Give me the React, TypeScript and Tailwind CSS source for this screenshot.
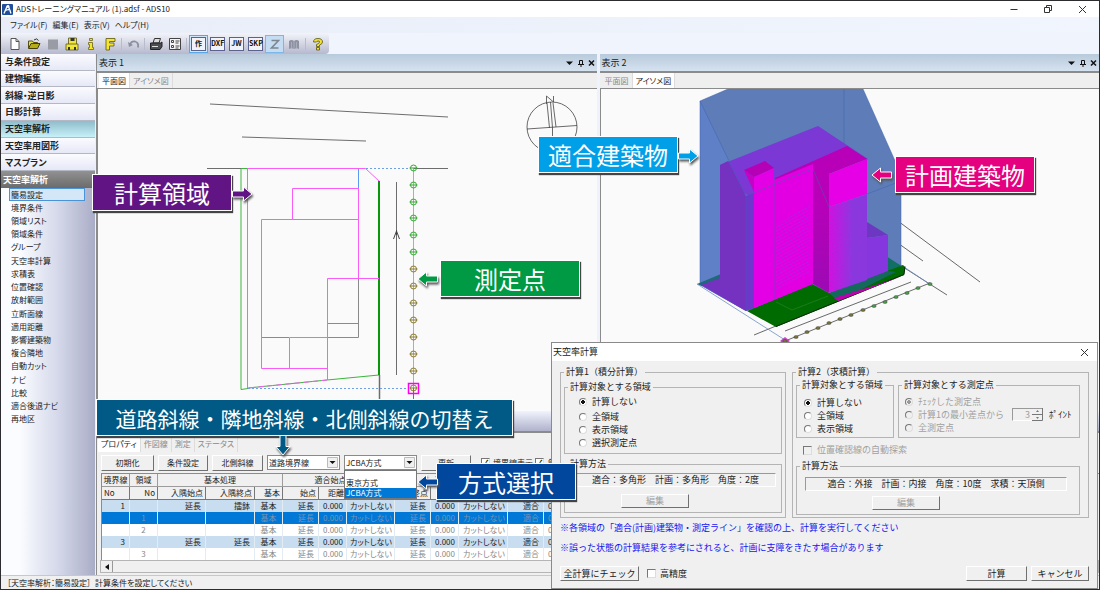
import { ReactNode, useState } from "react";
import clsx from "clsx";

const navItems = ["与条件設定", "建物編集", "斜線・逆日影", "日影計算", "天空率解析", "天空率用図形", "マスプラン"];

const subItems = [
  "簡易設定", "境界条件", "領域リスト", "領域条件", "グループ", "天空率計算", "求積表", "位置確認", "放射範囲",
  "立断面線", "適用距離", "影響建築物", "複合隣地", "自動カット", "ナビ", "比較", "適合後退ナビ", "再地区",
];

const columns = [
  { label: "No", width: "w-[28px]" },
  { label: "No", width: "w-[28px]" },
  { label: "入隅始点", width: "w-[48px]" },
  { label: "入隅終点", width: "w-[49px]" },
  { label: "基本", width: "w-[28px]" },
  { label: "始点", width: "w-[36px]" },
  { label: "距離", width: "w-[28px]" },
  { label: "", width: "w-[48px]" },
  { label: "終点", width: "w-[36px]" },
  { label: "", width: "w-[28px]" },
  { label: "", width: "w-[49px]" },
  { label: "", width: "w-[36px]" },
  { label: "", width: "w-[28px]" },
];

const tail = ["基本", "延長", "0.000", "カットしない", "延長", "0.000", "カットしない", "適合", "0.000"];

const rows = [
  { kind: "head", cells: ["1", "", "延長", "擂鉢", ...tail] },
  { kind: "selected", cells: ["", "1", "", "", ...tail] },
  { kind: "plain", cells: ["", "2", "", "", ...tail] },
  { kind: "head", cells: ["3", "", "延長", "延長", ...tail] },
  { kind: "plain", cells: ["", "3", "", "", ...tail] },
];

export default function App() {
  return (
    <div className="relative flex h-screen min-h-[590px] flex-col overflow-hidden border border-[#2b2b30] bg-[#f0f0f0] font-['Noto_Sans_CJK_JP','Noto_Sans',sans-serif] text-[8px] leading-3 text-[#222]">
      <TitleBar />
      <MenuBar />
      <ToolBar />

      <div className="flex min-h-0 flex-1">
        <Sidebar />
        <main className="flex min-w-0 flex-1 flex-col border-l border-[#8b8b8b]">
          <div className="flex min-h-0 flex-1 gap-[3px] bg-[#eef2fb]">
            <ViewPane title="表示 1" active="平面図">
              <PlanDrawing />
            </ViewPane>
            <ViewPane title="表示 2" active="アイソメ図">
              <IsoDrawing />
            </ViewPane>
          </div>
          <div className="h-5 shrink-0 bg-linear-to-b from-[#f1f4fd] to-[#b0b2cc]" />
          <PropertyPanel />
        </main>
      </div>

      <footer className="flex h-[14px] shrink-0 items-center gap-1 border-t border-[#c8c8c8] px-1.5 [font-feature-settings:'palt']">
        <span>［天空率解析：簡易設定］</span>
        <span>計算条件を設定してください</span>
      </footer>

      <CalcDialog />

      <Callout className="top-[173px] left-[91px] w-[140px] bg-[#611584] text-2xl">計算領域</Callout>
      <Arrow className="top-[183px] left-[230px]" color="#611584" direction="right" />
      <Callout className="top-[259px] left-[439px] w-[140px] bg-[#009944] text-2xl">測定点</Callout>
      <Arrow className="top-[268px] left-[414px]" color="#009944" direction="left" />
      <Callout className="top-[135px] left-[537px] w-[140px] bg-[#00a0e9] text-2xl">適合建築物</Callout>
      <Arrow className="top-[145px] left-[676px]" color="#00a0e9" direction="right" />
      <Callout className="top-[155px] left-[894px] w-[140px] bg-[#e4007f] text-2xl">計画建築物</Callout>
      <Arrow className="top-[164px] left-[868px]" color="#e4007f" direction="left" />
      <Callout className="top-[398px] left-[95px] w-[417px] bg-[#005a85] text-[21px]">
        道路斜線・隣地斜線・北側斜線の切替え
      </Callout>
      <Arrow className="top-[435px] left-[270px]" color="#005a85" direction="down" />
      <Callout className="top-[462px] left-[435px] w-[140px] bg-[#00479d] text-2xl">方式選択</Callout>
      <Arrow className="top-[471px] left-[414px]" color="#00479d" direction="left" />
    </div>
  );
}

function TitleBar() {
  return (
    <header className="flex h-4 shrink-0 items-center bg-white pl-px">
      <svg className="size-[11px]" viewBox="0 0 11 11">
        <rect width="11" height="11" rx="1" fill="#1f4e9c" />
        <path d="M2 9.5 5 2.5h1.5L9 9.5M3 7q3-2.500 5.500-.5" fill="none" stroke="#fff" strokeWidth="1.300" />
        <circle cx="6" cy="2.500" r="1.400" fill="#fff" />
      </svg>
      <h1 className="ml-[3px] flex-1 [font-feature-settings:'palt']">ADSトレーニングマニュアル (1).adsf - ADS10</h1>
      <div className="flex gap-6 pr-3">
        <button aria-label="最小化">
          <svg className="size-[10px]" viewBox="0 0 10 10" stroke="#333">
            <path d="M1.500 5.500h7" />
          </svg>
        </button>
        <button aria-label="元に戻す">
          <svg className="size-[10px]" viewBox="0 0 10 10" stroke="#333" fill="none">
            <path d="M1.500 3.500h5v5h-5zM3.500 3V1.500h5v5H7" />
          </svg>
        </button>
        <button aria-label="閉じる">
          <svg className="size-[10px]" viewBox="0 0 10 10" stroke="#333">
            <path d="m2 2 7 7M9 2 2 9" />
          </svg>
        </button>
      </div>
    </header>
  );
}

function MenuBar() {
  return (
    <nav className="flex h-4 shrink-0 items-center gap-[5px] bg-linear-to-r from-[#e9edf8] to-[#f1f5fd] pl-[9px] [font-feature-settings:'palt']">
      {["ファイル(F)", "編集(E)", "表示(V)", "ヘルプ(H)"].map((item) => (
        <button key={item}>{item}</button>
      ))}
    </nav>
  );
}

const Tool = ({ label, children }: { label: string; children: ReactNode }) => (
  <button aria-label={label} className="grid w-[19px] place-items-center">
    <svg className="size-[14px]" viewBox="0 0 14 14">
      {children}
    </svg>
  </button>
);

const TextTool = ({ active, children }: { active?: boolean; children: string }) => (
  <button
    className={clsx(
      "grid h-[18px] w-[19px] place-items-center border",
      active ? "border-[#5aa7e6] bg-[#cfe5fa]" : "border-transparent"
    )}
  >
    <span className="grid h-[14px] w-[15px] place-items-center border border-[#5a6390] bg-[#f1f3fb] text-[7px] leading-none font-bold text-[#111]">
      {children}
    </span>
  </button>
);

const Separator = ({ wide }: { wide?: boolean }) => (
  <span className={clsx("h-3 w-px bg-[#b9bccb]", wide ? "mx-0.5" : "mx-px")} />
);

function ToolBar() {
  return (
    <div className="flex h-[21px] shrink-0 bg-[#f0f4fd]">
      <div className="flex items-center rounded-r bg-linear-to-b from-[#f3f4fa] to-[#b6b9ce] pr-0.5 pl-1">
        <Tool label="新規">
          <path d="M3 1.500h5l3 3v8H3z" fill="#fff" stroke="#555" />
          <path d="M8 1.500v3h3" fill="none" stroke="#555" />
        </Tool>
        <Tool label="開く">
          <path d="M1.500 11V4h4l1 1.500h4V7" fill="#e6df3a" stroke="#55501a" />
          <path d="m1.500 11.500 2.500-5h9l-2.500 5z" fill="#b5ac18" stroke="#44400e" />
          <path d="M7 3q3-2.500 4.500.5" fill="none" stroke="#333" />
        </Tool>
        <Tool label="停止">
          <path d="M2 2.500h10v10H2z" fill="#999ba5" />
        </Tool>
        <Tool label="保存">
          <path d="M3.500 1h8v7h-8z" fill="#f0e63a" stroke="#5a5620" strokeWidth=".8" />
          <path d="M1 7h12v6H1z" fill="#f0e63a" stroke="#5a5620" strokeWidth=".8" />
          <path d="M5.500 1h4v3h-4zM3 10h2v3H3zM9 10h2v3H9z" fill="#333" />
        </Tool>
        <Tool label="情報">
          <path d="M5.500 1.500h3v2h-3zM4.500 5.500h4v5h1v2h-5v-2h1v-3h-1z" fill="#f5e52f" stroke="#6b651a" strokeWidth=".8" />
        </Tool>
        <Tool label="図形">
          <path d="M3 1.500h9v3H6.500v1.500H11v3H6.500v4H3z" fill="#f5e52f" stroke="#6b651a" strokeWidth=".9" />
        </Tool>
        <Separator wide />
        <Tool label="元に戻す">
          <path d="M3 8q1-4 5-3.500 4 1 3 6" fill="none" stroke="#8c8f9d" strokeWidth="1.800" />
          <path d="m1 5 1 5 4-2z" fill="#8c8f9d" />
        </Tool>
        <Separator />
        <Tool label="印刷">
          <path d="m4 6 1.500-4.500h6L10 6z" fill="#ddd" stroke="#333" />
          <path d="M1.500 6h10l1.500-1v4.500l-2 3H1.500z" fill="#4c4d52" stroke="#222" />
          <path d="M3 9.500h6" stroke="#ddd" />
        </Tool>
        <Tool label="設定">
          <path d="M1.500 1.500h11v11h-11z" fill="#f4f4f4" stroke="#444" />
          <path d="M3.500 3.500h2v2h-2zM3.500 8.500h2v2h-2zM7.500 4h4M7.500 6h3M7.500 9h4M7.500 11h3" fill="none" stroke="#444" />
        </Tool>
        <Separator wide />
        <TextTool active>作</TextTool>
        <TextTool>DXF</TextTool>
        <TextTool>JW</TextTool>
        <TextTool>SKP</TextTool>
        <button aria-label="Z" className="grid h-[18px] w-[19px] place-items-center border border-[#7db6e8] bg-[#c5ddf3]">
          <svg className="size-[12px]" viewBox="0 0 12 12" fill="none" stroke="#7f858f" strokeWidth="1.600">
            <path d="M2.500 2.500h7l-7 7.500h7" />
          </svg>
        </button>
        <Tool label="マニュアル">
          <path d="M2 4q2.500-2 5 0 2.500-2 5 0v8q-2.500-1.500-5 0-2.500-1.500-5 0z" fill="#8f92a2" />
          <path d="M7 4v8M4.500 5v6M9.500 5v6" stroke="#a9acba" />
        </Tool>
        <Separator wide />
        <Tool label="ヘルプ">
          <path
            d="M2.500 5Q2.500 1.500 7 1.500T11.500 5Q11.500 7 8.500 8v1.500h-3V7.500Q8.500 6.500 8.500 5T7 4 5.500 5zM5.500 10.500h3v2.500h-3z"
            fill="#f2e22e"
            stroke="#55501a"
            strokeWidth=".8"
          />
        </Tool>
      </div>
    </div>
  );
}

function Sidebar() {
  const [nav, setNav] = useState("天空率解析");
  const [sub, setSub] = useState("簡易設定");

  return (
    <aside className="mr-px flex w-[94px] shrink-0 flex-col bg-linear-to-r from-[#fafcff] from-20% via-[#d5d9ea] via-60% to-[#aaadc6]">
      <div className="grid h-[117px] shrink-0 grid-rows-7">
        {navItems.map((item) => (
          <button
            key={item}
            onClick={() => setNav(item)}
            className={clsx(
              "border-b border-[#b4b7c4] pl-1 text-left text-[9px] leading-none font-bold [font-feature-settings:'palt']",
              nav === item
                ? "bg-linear-to-b from-[#8fbccb] to-[#c7f1f8]"
                : "bg-linear-to-b from-[#fbfbff] to-[#e6e8f6]"
            )}
          >
            {item}
          </button>
        ))}
      </div>
      <h2 className="flex h-[17px] shrink-0 items-center bg-linear-to-b from-[#929292] to-[#6b6b6b] pl-0.5 text-[9px] font-bold text-white">
        {nav}
      </h2>
      <ul className="grid h-[238px] shrink-0 auto-rows-fr">
        {subItems.map((item) => (
          <li key={item} className="flex pr-2.5 pl-2">
            <button
              onClick={() => setSub(item)}
              className={clsx(
                "w-full border px-px text-left leading-none [font-feature-settings:'palt']",
                sub === item ? "border-[#4a93d6] bg-[#d3e7f8]" : "border-transparent"
              )}
            >
              {item}
            </button>
          </li>
        ))}
      </ul>
    </aside>
  );
}

function ViewPane({ title, active, children }: { title: string; active: string; children: ReactNode }) {
  return (
    <section className="flex min-w-0 flex-1 flex-col">
      <div className="flex h-[17px] shrink-0 items-center bg-linear-to-b from-[#b8cadb] to-[#d5e2f0] pr-0.5 pl-0.5">
        <h2 className="flex-1 text-[9px]">{title}</h2>
        <svg className="h-[10px] w-[31px]" viewBox="0 0 31 10" stroke="#111" fill="none">
          <path d="M2 3.500h7L5.500 7z" fill="#111" stroke="none" />
          <path d="M15.500 6V2.500h3V6M14 6.500h6M17 6.500V9" />
          <path d="m25 2.500 5 5M30 2.500l-5 5" strokeWidth="1.500" />
        </svg>
      </div>
      <div className="flex h-[17px] shrink-0 border-t-2 border-[#8b8b8b] bg-[#efefef] pl-0.5">
        {["平面図", "アイソメ図"].map((tab) => (
          <button
            key={tab}
            className={clsx(
              "border-r border-[#dcdcdc] px-[3px] [font-feature-settings:'palt']",
              tab === active ? "bg-white" : "text-[#888]"
            )}
          >
            {tab}
          </button>
        ))}
      </div>
      <div className="min-h-0 flex-1 overflow-hidden border-t border-l border-[#8b8b8b] bg-[#fafafa]">{children}</div>
    </section>
  );
}

const measurePoints = [168, 185, 202, 218, 235, 252, 269, 286, 303, 320, 337, 354, 371, 388];

function PlanDrawing() {
  return (
    <svg className="block h-[323px] w-[497px]" viewBox="98 89 497 323" fill="none">
      <g stroke="#6d6d6d">
        <path d="M210 104 448 117M242 137l124 4M207 168.500h34M414 168.500h34" />
        <path d="M261 337.500h28M327 337.500h31.500V278M327 323.500h31.500" stroke="#8a8a8a" />
        <path d="M396.500 182v193M413.500 388v24" />
        <path d="M379.500 375v37" strokeWidth="1.500" />
        <path d="m393.500 239 3-8 3 8M396.500 230v5" stroke="#444" />
      </g>
      <g stroke="#3bb53b">
        <path d="M248 168.500h-7V389.500l7-1" />
        <path d="m379 375-52 5-79 8" />
      </g>
      <path d="M379 181v194" stroke="#0a960a" strokeWidth="2" />
      <g stroke="#f95cf9">
        <path d="M247.500 388V168.500H365.500L379 181" />
        <path d="M358.500 188.500h-66V219M358.500 188v90M358.500 219.500h-97V368.500h66M289.500 368V337.500h38M379 278.500h-51.500V380" />
        <path d="m327 380-79 8" strokeDasharray="6 3" />
      </g>
      <path d="M358.500 169v19" stroke="#5c9cf0" />
      <path d="M366 168.500h44M248 388.500h160" stroke="#6e9fe0" strokeDasharray="2 2" />
      <path d="M413.500 168v220" stroke="#e8a05c" />
      {measurePoints.map((y, i) => (
        <g key={y} stroke={i < 6 ? "#35a835" : "#8a7a34"}>
          <circle cx="413.500" cy={y} r="3" />
          <path d={`M409.500 ${y}h8`} />
        </g>
      ))}
      <path d="M408.500 383.500h10v10h-10z" stroke="#f0e" strokeWidth="1.500" />
      <g stroke="#444" strokeWidth=".8">
        <circle cx="552" cy="127" r="25" />
        <path d="m527 129 50-3.500M547 103l2.500 25M550.500 102l2 26M553 103l3 24M552.500 128v12" />
        <path d="M546.500 104v-8l7 6v-6" />
      </g>
    </svg>
  );
}

const isoPoints = [
  [930, 284], [918, 288], [907, 293], [896, 297], [885, 302], [874, 306], [863, 310],
  [851, 315], [840, 319], [829, 323], [818, 328], [807, 332], [796, 337], [785, 341],
];

function IsoDrawing() {
  return (
    <svg className="block h-[323px] w-[498px]" viewBox="601 89 498 323">
      <defs>
        <linearGradient id="front" x1="0" x2="1" y1="0" y2="0">
          <stop offset=".05" stopColor="#d010e0" />
          <stop offset=".6" stopColor="#8a38de" />
        </linearGradient>
        <linearGradient id="side" x1="0" x2="0" y1="0" y2="1">
          <stop offset=".3" stopColor="#b800b8" />
          <stop offset="1" stopColor="#9c0ab4" />
        </linearGradient>
        <pattern id="hatch" width="4" height="3" patternUnits="userSpaceOnUse" patternTransform="rotate(-28)">
          <path d="M0 1.500h3" stroke="#a82ae0" strokeWidth=".6" />
        </pattern>
      </defs>

      <path d="m867 198 113 84M888 236l35 25M754 335l22-9M785 331l126-49M785 341l145-58M903 267l44 28" stroke="#444" strokeWidth=".8" />
      <path d="m697 284 88 56M901 265l30 20" stroke="#6d8fc4" strokeWidth=".8" />

      <path d="m700 101 28-12h135l33 74 5 20v84l-25 15-130 29-46-26z" fill="#5d7cb8" />
      <path d="m700 101 46 95v115l-46-26z" fill="#5f80c6" />
      <path d="m697 284 24-10v6l-19 6z" fill="#1d6a78" />
      <path d="m886 256 17 11-17 8z" fill="#126f66" />

      <path d="m720 165 98-39 50 33-92 30-22 10-34-20z" fill="#7b38d4" />
      <path d="m720 165 8-4 18 35v115l-45-26 19-7z" fill="#7531c0" />
      <path d="m746 196 8-3v115l-8 3z" fill="#6e36cc" />

      <path d="m747 311 65-27 17 9 74-28 2 2-1 8-128 52z" fill="#006b00" />
      <path d="m776 326.500 128-52 1-8" fill="none" stroke="#042604" />
      <path d="m829 293 59-22 8 1-58 29z" fill="#12695c" />
      <path d="m838 301 62-24-24 8-42 13z" fill="#c000b0" />
      <path d="m776 302 16 8 36-14" fill="none" stroke="#2b8a2b" strokeWidth=".6" />

      <path d="m775 178 72-32 20 13-38 15v20l-16-29-38 15z" fill="#b800b8" />
      <path d="m744 170 21-9 9 7-20 9z" fill="#b600b6" />
      <path d="m744 170 10 7v15z" fill="#c404c4" />
      <path d="m754 177 20-9v132l-20 8z" fill="#e400e4" />
      <path d="m774 180 39-16v120l-39 16z" fill="#e200e2" />
      <path d="m776 225 34-22v70l-34 18z" fill="url(#hatch)" />
      <path d="m813 161 16 13v119l-16-9z" fill="url(#side)" />
      <path d="m829 174 38-15v35l-38 13z" fill="#e600e6" />
      <path d="m829 207 38-13v86l-38 13z" fill="url(#front)" />
      <path d="m829 207 22-7v80l-22 13z" fill="url(#hatch)" />
      <path d="m867 222 21 13-21 3z" fill="#6c38c2" />
      <path d="m867 238 21-3v36l-21 8z" fill="#8636de" />

      <g fill="none" stroke="#3f62ad" strokeWidth=".5">
        <path d="m728 89-28 12 46 95 66-27M700 101v184M844 89v55M863 89l33 74 5 20v84M867 194l34-13M813 169l16 38M746 196v115M774 180v120" />
      </g>

      {isoPoints.map(([x, y], i) => (
        <g key={x}>
          {i === 13 && <path d="m780 341 5-4 5 4-5 4z" fill="#d040c8" />}
          <ellipse cx={x} cy={y} rx="2.200" ry="1.500" fill={i < 6 ? "#4a9a4a" : "#77733c"} stroke="#333" strokeWidth=".4" />
        </g>
      ))}
    </svg>
  );
}

const buttonClasses =
  "border border-t-white border-l-white border-r-[#707070] border-b-[#707070] bg-[#f0f0f0] text-center disabled:text-[#a0a0a0]";

const checkClasses =
  "grid size-[9px] shrink-0 appearance-none place-items-center border border-t-[#777] border-l-[#777] border-r-[#ddd] border-b-[#ddd] bg-white checked:before:text-[8px] checked:before:leading-none checked:before:font-bold checked:before:content-['✓'] disabled:bg-[#f0f0f0]";

const radioClasses =
  "size-2 shrink-0 appearance-none rounded-full border border-t-[#777] border-l-[#777] border-r-[#ddd] border-b-[#ddd] bg-white checked:bg-[radial-gradient(circle,#111_0_2px,#fff_2px)] disabled:bg-[#f0f0f0] disabled:checked:bg-[radial-gradient(circle,#999_0_2px,#f0f0f0_2px)]";

const Combo = ({ label, options }: { label: string; options: string[] }) => (
  <div className="relative w-[73px]">
    <select
      aria-label={label}
      className="h-[15px] w-full appearance-none border border-[#8a8a8a] bg-white pl-px text-[8px] leading-3"
      defaultValue={options[0]}
    >
      {options.map((option) => (
        <option key={option}>{option}</option>
      ))}
    </select>
    <svg className="pointer-events-none absolute top-0.5 right-0.5 h-[11px] w-[11px]" viewBox="0 0 11 11">
      <path d="M.5.5h10v10H.5z" fill="#f0f0f0" stroke="#bbb" />
      <path d="M2.500 4h6L5.500 7z" fill="#111" />
    </svg>
  </div>
);

function PropertyPanel() {
  return (
    <section className="flex h-[144px] shrink-0 flex-col border-t-2 border-[#8b8b8b]">
      <div className="flex h-[19px] items-end pl-px">
        {["プロパティ", "作図線", "測定", "ステータス"].map((tab, i) => (
          <button
            key={tab}
            className={clsx(
              "h-4 border-r border-[#dcdcdc] px-[3px] [font-feature-settings:'palt']",
              i === 0 ? "bg-white" : "text-[#888]"
            )}
          >
            {tab}
          </button>
        ))}
      </div>

      <div className="flex h-[21px] shrink-0 items-center gap-1 pl-1">
        <button className={clsx(buttonClasses, "h-4 w-[53px]")}>初期化</button>
        <button className={clsx(buttonClasses, "h-4 w-[50px]")}>条件設定</button>
        <button className={clsx(buttonClasses, "h-4 w-[51px]")}>北側斜線</button>
        <Combo label="境界線の種類" options={["道路境界線", "隣地境界線", "北側境界線"]} />
        <div className="relative">
          <Combo label="方式" options={["JCBA方式", "東京方式"]} />
          <ul className="absolute top-[15px] left-0 z-10 h-[29px] w-[73px] border border-[#777] bg-white pt-[7px] leading-[10px]">
            <li className="pl-px">東京方式</li>
            <li className="bg-[#0078d7] pl-px text-white">JCBA方式</li>
          </ul>
        </div>
        <button className={clsx(buttonClasses, "h-4 w-[50px]")}>更新</button>
        <label className="ml-1.5 flex items-center gap-[3px] whitespace-nowrap">
          <input type="checkbox" className={checkClasses} defaultChecked />
          境界線表示
        </label>
        <label className="-ml-0.5 flex items-center gap-1 whitespace-nowrap">
          <input type="checkbox" className={checkClasses} defaultChecked />
          領域表示
        </label>
      </div>

      <div className="ml-1 min-h-0 overflow-hidden border-t border-l border-[#8b8b8b] bg-[#f0f0f0]">
        <table className="w-[470px] table-fixed border-separate border-spacing-0 whitespace-nowrap">
          <colgroup>
            {columns.map((column, i) => (
              <col key={i} className={column.width} />
            ))}
          </colgroup>
          <thead>
            <tr className="h-[13px] [&>th]:border-r [&>th]:border-b [&>th]:border-[#9c9c9c] [&>th]:p-0 [&>th]:font-normal">
              <th>境界線</th>
              <th>領域</th>
              <th colSpan={3}>基本処理</th>
              <th colSpan={3}>
                <span className="pr-4">適合始点</span>
              </th>
              <th colSpan={3}>適合終点</th>
              <th colSpan={2} />
            </tr>
            <tr className="h-[13px]">
              {columns.map((column, i) => (
                <th
                  key={i}
                  className={clsx(
                    "border-r border-b border-[#777] px-0.5 py-0 font-normal",
                    i === 0 ? "text-left" : "text-right"
                  )}
                >
                  {column.label}
                </th>
              ))}
            </tr>
          </thead>
          <tbody>
            {rows.map((row, r) => (
              <tr
                key={r}
                className={clsx(
                  "h-3",
                  row.kind === "head" && "bg-[#c8ddf0]",
                  row.kind === "selected" && "bg-[#0078d7] text-[#7894b0]",
                  row.kind === "plain" && "bg-white text-[#888]"
                )}
              >
                {row.cells.map((cell, c) => (
                  <td
                    key={c}
                    className={clsx(
                      "border-r border-[#e3ebf3] py-0 leading-3",
                      c === 1 || c === 4 ? "text-center" : "text-right",
                      c === 7 || c === 10 ? "px-0.5 [font-feature-settings:'palt']" : "px-1"
                    )}
                  >
                    {cell}
                  </td>
                ))}
              </tr>
            ))}
          </tbody>
        </table>
      </div>
      <div className="ml-[3px] flex h-[13px] shrink-0 border border-[#b5b5b5]">
        <button aria-label="左へスクロール" className="grid w-3 place-items-center border-r border-[#999]">
          <svg className="size-[6px]" viewBox="0 0 6 6">
            <path d="M5 0v6L1 3z" fill="#111" />
          </svg>
        </button>
      </div>
    </section>
  );
}

const Group = ({
  title,
  className,
  bodyClassName,
  children,
}: {
  title: string;
  className?: string;
  bodyClassName?: string;
  children: ReactNode;
}) => (
  <fieldset className={clsx("min-w-0 border border-[#b4b4b4]", className)}>
    <legend className="ml-[3px] px-0.5 leading-3 whitespace-nowrap">{title}</legend>
    <div className={bodyClassName}>{children}</div>
  </fieldset>
);

const Radio = ({
  name,
  label,
  checked,
  disabled,
}: {
  name: string;
  label: string;
  checked?: boolean;
  disabled?: boolean;
}) => (
  <label className={clsx("flex h-[13px] items-center gap-[5px] whitespace-nowrap", disabled && "text-[#a0a0a0]")}>
    <input type="radio" name={name} className={radioClasses} defaultChecked={checked} disabled={disabled} />
    {label}
  </label>
);

const methodClasses =
  "flex h-[14px] items-center justify-center gap-[9px] border border-t-[#999] border-l-[#999] border-r-white border-b-white";

function CalcDialog() {
  return (
    <div
      role="dialog"
      aria-label="天空率計算"
      className="absolute top-[341px] left-[550px] z-10 flex h-[247px] w-[547px] flex-col border border-[#8a8a8a] bg-[#f0f0f0] text-[9px] leading-3"
    >
      <div className="flex h-[18px] shrink-0 items-center justify-between bg-white pr-2 pl-px">
        <h2>天空率計算</h2>
        <button aria-label="閉じる">
          <svg className="size-[9px]" viewBox="0 0 9 9" stroke="#333">
            <path d="m1 1 7 7M8 1 1 8" />
          </svg>
        </button>
      </div>

      <div className="mt-[5px] flex gap-1.5 px-2">
        <Group title="計算1（積分計算）" className="w-[226px]" bodyClassName="px-[3px] pb-0.5">
          <Group title="計算対象とする領域" className="mt-[3px]" bodyClassName="pt-0.5 pb-1 pl-3.5">
            <div className="mb-0.5">
              <Radio name="area1" label="計算しない" checked />
            </div>
            <Radio name="area1" label="全領域" />
            <Radio name="area1" label="表示領域" />
            <Radio name="area1" label="選択測定点" />
          </Group>
          <Group title="計算方法" className="mt-1" bodyClassName="px-[5px] pb-1">
            <p className={clsx(methodClasses, "mt-[3px] ml-[5px]")}>
              <span>適合：多角形</span>
              <span>計画：多角形</span>
              <span>角度：2度</span>
            </p>
            <button disabled className={clsx(buttonClasses, "mt-[7px] ml-[51px] block h-[14px] w-[68px]")}>
              編集
            </button>
          </Group>
        </Group>

        <Group title="計算2（求積計算）" className="flex-1" bodyClassName="pt-px pr-2 pb-0.5 pl-[3px]">
          <div className="flex gap-1">
            <Group title="計算対象とする領域" className="w-[98px]" bodyClassName="pt-[5px] pb-0.5 pl-[7px]">
              <Radio name="area2" label="計算しない" checked />
              <Radio name="area2" label="全領域" />
              <Radio name="area2" label="表示領域" />
            </Group>
            <Group title="計算対象とする測定点" className="flex-1" bodyClassName="pt-1 pb-0.5 pl-1.5">
              <Radio name="point" label="ﾁｪｯｸした測定点" checked disabled />
              <div className="flex items-center">
                <Radio name="point" label="計算1の最小差点から" disabled />
                <span className="relative ml-2 w-[31px]">
                  <input
                    aria-label="ポイント数"
                    disabled
                    defaultValue="3"
                    className="block h-[13px] w-full border border-t-[#999] border-l-[#999] border-r-white border-b-white pr-3 text-right text-[#a0a0a0]"
                  />
                  <svg className="absolute top-0 right-0 h-[13px] w-[11px]" viewBox="0 0 11 13">
                    <path d="M0 6.500h10.500M0 12.500h10.500V0" fill="none" stroke="#777" />
                    <path d="m4 4 1.500-2L7 4zM4 9l1.500 2L7 9z" fill="#777" />
                  </svg>
                </span>
                <span className="ml-1.5">ﾎﾟｲﾝﾄ</span>
              </div>
              <Radio name="point" label="全測定点" disabled />
            </Group>
          </div>
          <label className="mt-1.5 ml-[7px] flex h-3 items-center gap-[5px] text-[#a0a0a0]">
            <input type="checkbox" className={checkClasses} disabled />
            位置確認線の自動探索
          </label>
          <Group title="計算方法" className="mt-1" bodyClassName="pr-3 pb-1 pl-2">
            <p className={clsx(methodClasses, "mt-[5px]")}>
              <span>適合：外接</span>
              <span>計画：内接</span>
              <span>角度：10度</span>
              <span>求積：天頂側</span>
            </p>
            <button disabled className={clsx(buttonClasses, "mt-[5px] ml-[67px] block h-[14px] w-[68px]")}>
              編集
            </button>
          </Group>
        </Group>
      </div>

      <div className="mt-1 flex flex-col gap-2 pl-2 text-[#1414f0]">
        <p>※各領域の「適合(計画)建築物・測定ライン」を確認の上、計算を実行してください</p>
        <p>※誤った状態の計算結果を参考にされると、計画に支障をきたす場合があります</p>
      </div>

      <div className="mt-auto mb-[7px] flex items-center gap-1 px-2">
        <button className={clsx(buttonClasses, "h-[15px] w-[79px]")}>全計算にチェック</button>
        <label className="ml-1 flex flex-1 items-center gap-1">
          <input type="checkbox" className={checkClasses} />
          高精度
        </label>
        <button className={clsx(buttonClasses, "h-[15px] w-[61px]")}>計算</button>
        <button className={clsx(buttonClasses, "h-[15px] w-[58px]")}>キャンセル</button>
      </div>
    </div>
  );
}

const Callout = ({ className, children }: { className: string; children: ReactNode }) => (
  <p
    className={clsx(
      "absolute z-20 flex h-[37px] items-center justify-center border border-white whitespace-nowrap text-white shadow-[1px_2px_1px_#444]",
      className
    )}
  >
    {children}
  </p>
);

const rotation = { right: 0, down: 90, left: 180 };

const Arrow = ({
  className,
  color,
  direction,
}: {
  className: string;
  color: string;
  direction: keyof typeof rotation;
}) => (
  <svg className={clsx("absolute z-20 h-[20px] w-[24px] drop-shadow-[1px_2px_1px_#555]", className)} viewBox="0 0 24 20">
    <path
      d="M1.500 7h11V3L21 10l-8.500 7v-4h-11z"
      transform={`rotate(${rotation[direction]} 12 10)`}
      fill={color}
      stroke="#fff"
    />
  </svg>
);
